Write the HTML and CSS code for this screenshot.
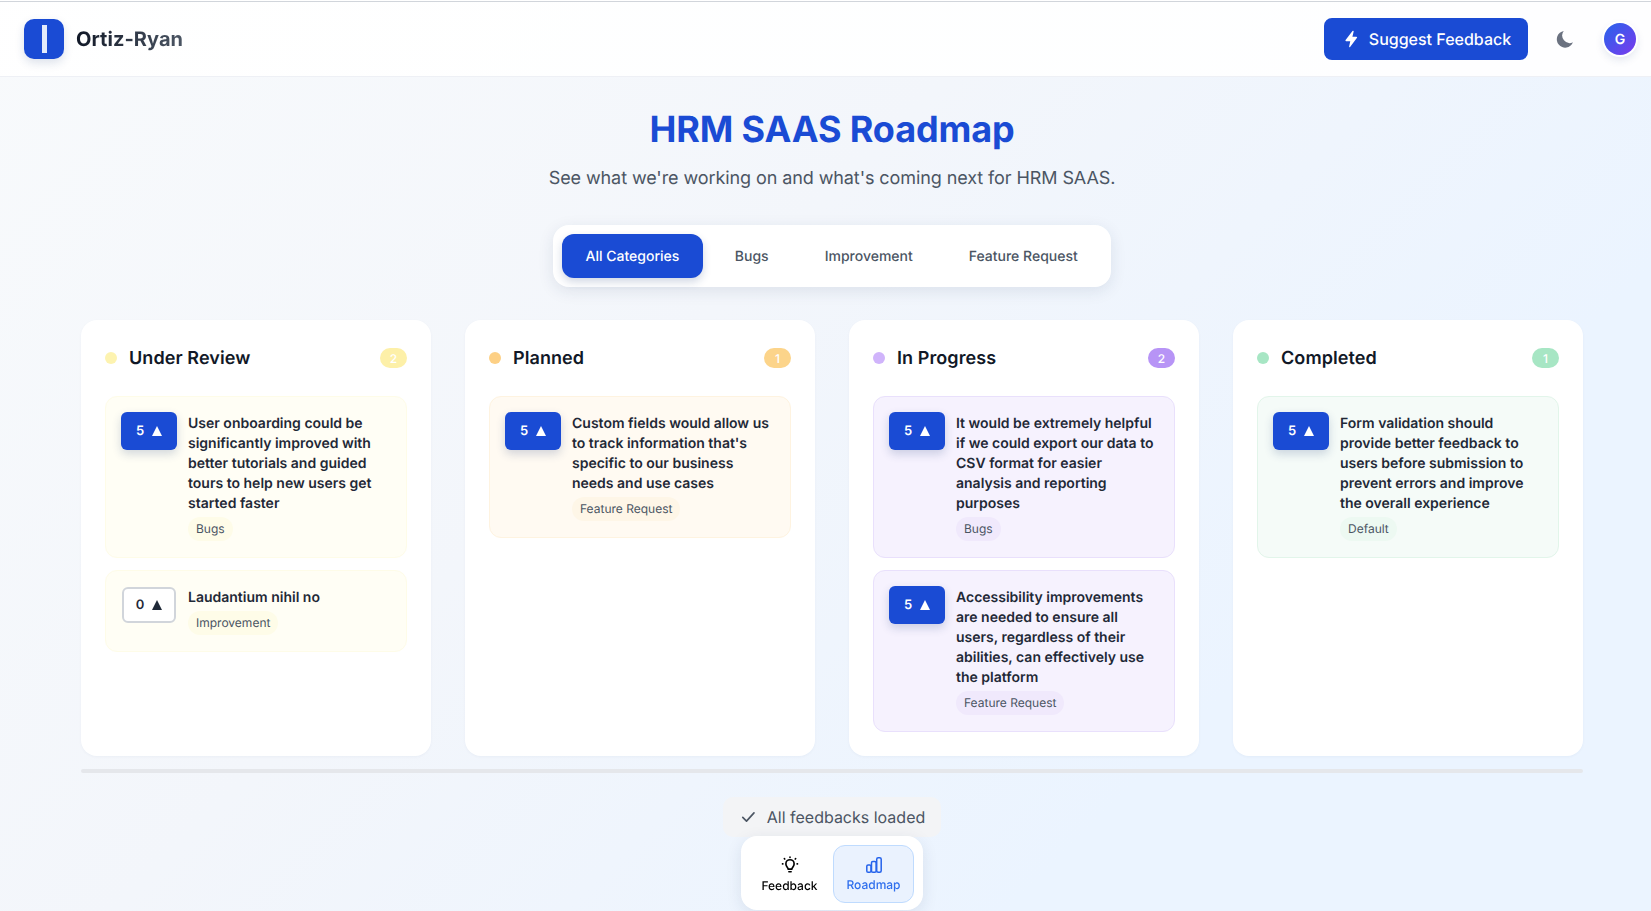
FILE: index.html
```html
<!DOCTYPE html>
<html lang="en">
<head>
<meta charset="utf-8">
<title>HRM SAAS Roadmap</title>
<link rel="stylesheet" href="styles.css">
</head>
<body>
<header class="topbar">
  <div class="brand">
    <span class="logo"><span class="logo-bar"></span></span>
    <span class="brand-name">Ortiz-Ryan</span>
  </div>
  <div class="actions">
    <button class="suggest">
      <svg class="bolt" viewBox="0 0 24 24"><path d="M13.800 2.500 5.500 13.300a.8.8 0 0 0 .6 1.300h5l-1.300 6.400c-.2.9.6 1.200 1.100.6l8.300-11a.8.8 0 0 0-.6-1.300h-4.900l1.500-6.200c.2-.9-.6-1.200-1.400-.6z" fill="#fff"/></svg>
      Suggest Feedback
    </button>
    <svg class="moon" viewBox="0 0 24 24"><path d="M10.500 2.500a10 10 0 1 0 11 13.500 9 9 0 0 1-11-13.500z" fill="#6b7280"/></svg>
    <span class="avatar">G</span>
  </div>
</header>
<main class="page">
  <h1 class="title">HRM SAAS Roadmap</h1>
  <p class="subtitle">See what we're working on and what's coming next for HRM SAAS.</p>
  <div class="filters">
    <button class="filter active">All Categories</button>
    <button class="filter">Bugs</button>
    <button class="filter">Improvement</button>
    <button class="filter">Feature Request</button>
  </div>
  <section class="board">
    <div class="column review">
      <div class="col-head"><span class="dot"></span><h2>Under Review</h2><span class="count">2</span></div>
      <article class="item"><button class="vote on"><span>5</span><i class="tri"></i></button><div class="body"><p>User onboarding could be significantly improved with better tutorials and guided tours to help new users get started faster</p><span class="tag">Bugs</span></div></article>
      <article class="item"><button class="vote"><span>0</span><i class="tri"></i></button><div class="body"><p>Laudantium nihil no</p><span class="tag">Improvement</span></div></article>
    </div>
    <div class="column planned">
      <div class="col-head"><span class="dot"></span><h2>Planned</h2><span class="count">1</span></div>
      <article class="item"><button class="vote on"><span>5</span><i class="tri"></i></button><div class="body"><p>Custom fields would allow us to track information that's specific to our business needs and use cases</p><span class="tag">Feature Request</span></div></article>
    </div>
    <div class="column progress">
      <div class="col-head"><span class="dot"></span><h2>In Progress</h2><span class="count">2</span></div>
      <article class="item"><button class="vote on"><span>5</span><i class="tri"></i></button><div class="body"><p>It would be extremely helpful if we could export our data to CSV format for easier analysis and reporting purposes</p><span class="tag">Bugs</span></div></article>
      <article class="item"><button class="vote on"><span>5</span><i class="tri"></i></button><div class="body"><p>Accessibility improvements are needed to ensure all users, regardless of their abilities, can effectively use the platform</p><span class="tag">Feature Request</span></div></article>
    </div>
    <div class="column done">
      <div class="col-head"><span class="dot"></span><h2>Completed</h2><span class="count">1</span></div>
      <article class="item"><button class="vote on"><span>5</span><i class="tri"></i></button><div class="body"><p>Form validation should provide better feedback to users before submission to prevent errors and improve the overall experience</p><span class="tag">Default</span></div></article>
    </div>
  </section>
  <div class="track"></div>
  <div class="loaded-row">
    <div class="loaded">
      <svg class="check" viewBox="0 0 24 24"><path d="M5 12.500 10 17.500 20 6.500" fill="none" stroke="#4b5563" stroke-width="2.200" stroke-linecap="round" stroke-linejoin="round"/></svg>
      All feedbacks loaded
    </div>
  </div>
</main>
<nav class="dock">
  <a class="dock-item feedback">
    <svg class="dock-icon bulb" viewBox="0 0 24 24" fill="none" stroke="#000" stroke-width="2.200" stroke-linecap="round" stroke-linejoin="round"><path d="M9.500 17.500h5M10.500 21h3M9.500 17.500c0-2-3-3.500-3-7a5.500 5.500 0 0 1 11 0c0 3.500-3 5-3 7"/><path d="M12 1.500v.5M4.500 3.500l.5.500M19.500 3.500l-.5.500M2 10.500h.5M21.500 10.500h.5"/></svg>
    Feedback
  </a>
  <a class="dock-item current">
    <svg class="dock-icon" viewBox="0 0 16 16" fill="none" stroke="#2563eb" stroke-width="1.500" stroke-linejoin="round"><rect x=".8" y="8" width="4.200" height="7.200" rx="1.300"/><rect x="5.500" y="4.500" width="4.600" height="10.700" rx="1.300"/><rect x="10.700" y=".8" width="4.500" height="14.400" rx="1.500"/></svg>
    Roadmap
  </a>
</nav>
</body>
</html>
```
FILE: styles.css
```css
* { box-sizing: border-box; }
html, body { margin: 0; height: 100%; }
body {
  font-family: Inter, "Liberation Sans", sans-serif;
  background: linear-gradient(135deg, #f8fafc 0%, #f3f6fb 40%, #ebf4ff 75%, #ebf4ff 100%);
  color: #111827;
  overflow: hidden;
  text-rendering: geometricPrecision;
}
button { font-family: inherit; border: 0; cursor: pointer; text-rendering: geometricPrecision; }
.topbar {
  height: 77px;
  padding: 2px 15px 0 24px;
  border-bottom: 1px solid #eef0f5;
  background: linear-gradient(#fff 1px, #d1d5db 1px, #d1d5db 2px, rgba(255, 255, 255, 0.95) 2px);
  display: flex;
  align-items: center;
  justify-content: space-between;
}
.brand { display: flex; align-items: center; gap: 12px; }
.logo {
  width: 40px; height: 40px;
  border-radius: 10px;
  background: #1a4bd4;
  box-shadow: 0 4px 10px rgba(30, 60, 120, 0.15);
  display: flex; align-items: center; justify-content: center;
}
.logo-bar { width: 5px; height: 28px; background: #e4ebfb; }
.brand-name {
  font-size: 20px; font-weight: 700;
  letter-spacing: 0.05px;
  background: linear-gradient(90deg, #111827, #4b5563);
  -webkit-background-clip: text; background-clip: text;
  color: transparent;
}
.actions { display: flex; align-items: center; }
.suggest {
  width: 204px; height: 42px;
  border-radius: 8px;
  background: #1a4bd4;
  color: #fff;
  font-size: 16px; font-weight: 500;
  display: flex; align-items: center; justify-content: center; gap: 8px;
  margin-right: 27px;
}
.bolt { width: 20px; height: 20px; }
.moon { width: 20px; height: 20px; margin-right: 29px; }
.avatar {
  width: 32px; height: 32px;
  border-radius: 50%;
  background: linear-gradient(135deg, #2563eb, #7c3aed);
  color: #fff; font-size: 14px; font-weight: 600;
  display: flex; align-items: center; justify-content: center;
  box-shadow: 0 0 0 2px #fff, 0 4px 10px rgba(30, 60, 120, 0.15);
}
.page { padding: 0 68px 0 81px; }
.title {
  margin: 32px 0 0;
  text-align: center;
  font-size: 36px; line-height: 40px; font-weight: 700;
  letter-spacing: -0.13px;
  color: #1a4bd4;
}
.subtitle {
  margin: 16px 0 0;
  text-align: center;
  font-size: 18px; line-height: 28px;
  letter-spacing: -0.09px;
  color: #4b5563;
}
.filters {
  width: 558px; height: 62px;
  margin: 32px auto 0;
  padding: 9px;
  background: #fff;
  border-radius: 16px;
  display: flex;
  gap: 8px;
  box-shadow: 0 4px 16px rgba(30, 50, 90, 0.1);
}
.filter {
  height: 44px;
  padding: 0 24px;
  background: transparent;
  border-radius: 12px;
  font-size: 14px; font-weight: 500;
  color: #4b5563;
  white-space: nowrap;
  flex: none;
}
.filter.active {
  padding: 0 23.5px;
  background: #1a4bd4; color: #fff;
  box-shadow: 0 4px 8px rgba(30, 60, 120, 0.2);
}
.board {
  margin-top: 33px;
  display: grid;
  grid-template-columns: repeat(4, 350px);
  gap: 34px;
}
.column {
  height: 436px;
  background: #fff;
  border-radius: 16px;
  padding: 24px;
  box-shadow: 0 1px 3px rgba(30, 50, 90, 0.04);
}
.col-head { display: flex; align-items: center; height: 28px; margin: 0 0 24px; }
.col-head h2 { margin: 2px 0 0 12px; font-size: 18px; line-height: 28px; font-weight: 600; letter-spacing: 0.08px; color: #111827; flex: 1; }
.dot { width: 12px; height: 12px; border-radius: 50%; }
.count {
  width: 27px; height: 20px; border-radius: 10px;
  color: #fff; font-size: 12px; font-weight: 500;
  display: flex; align-items: center; justify-content: center;
}
.item {
  display: flex;
  gap: 11px;
  padding: 15px;
  border: 1px solid;
  border-radius: 12px;
  margin-bottom: 12px;
}
.vote {
  flex: none;
  width: 56px; height: 38px;
  border-radius: 6px;
  display: flex; align-items: center; justify-content: center; gap: 8px;
  font-size: 13px; font-weight: 600;
  background: #fff; color: #1f2937;
  border: 2px solid #d1d5db;
}
.vote:not(.on) { width: 54px; height: 36px; margin: 1px 1px 0 1px; }
.vote.on {
  background: #1a4bd4; color: #fff; border: 0;
  box-shadow: 0 4px 10px rgba(30, 60, 120, 0.2);
}
.tri {
  width: 0; height: 0;
  border-left: 5px solid transparent;
  border-right: 5px solid transparent;
  border-bottom: 10px solid currentColor;
}
.body { flex: 1; min-width: 0; }
.body p { margin: 2px 0 3px; font-size: 14px; line-height: 20px; font-weight: 600; color: #1f2937; }
.tag {
  display: block;
  width: fit-content;
  height: 24px; line-height: 24px;
  padding: 0 8px;
  margin-bottom: 1px;
  border-radius: 12px;
  font-size: 12px;
  color: #4b5563;
}
.review .dot { background: #fdf3b0; }
.review .count { background: #fdf0a8; }
.review .item { background: #fffef5; border-color: #fefce8; }
.review .tag { background: #fefce8; }
.planned .dot { background: #fdd085; }
.planned .count { background: #fcd48a; }
.planned .item { background: #fffaf2; border-color: #fef3e0; }
.planned .tag { background: #fef6e7; }
.progress .dot { background: #d0b4fb; }
.progress .count { background: #b794f6; }
.progress .item { background: #f6f2fe; border-color: #e9e0fc; }
.progress .tag { background: #f0e9fc; }
.done .dot { background: #a7e6c4; }
.done .count { background: #a7e6c4; }
.done .item { background: #f5fbf8; border-color: #e2f5ea; }
.done .tag { background: #edf9f2; }
.track { height: 4px; background: #e5e7eb; margin: 13px 0 0; width: 1502px; border-radius: 2px; }
.loaded-row { display: flex; justify-content: center; margin-top: 24px; width: 1502px; }
.loaded {
  height: 40px;
  padding: 0 16px;
  border-radius: 10px;
  background: #f3f4f6;
  font-size: 16px;
  color: #4b5563;
  display: flex; align-items: center; gap: 10px;
}
.check { width: 18px; height: 18px; }
.dock {
  position: fixed;
  left: 741px; top: 836px;
  width: 182px; height: 74px;
  padding: 9px;
  border-radius: 16px;
  background: #fff;
  box-shadow: 0 4px 16px rgba(30, 50, 90, 0.1);
  display: flex; gap: 4px;
}
.dock-item {
  height: 58px;
  width: 81px;
  border-radius: 12px;
  border: 1px solid transparent;
  font-size: 12px; font-weight: 500;
  color: #000;
  display: flex; flex-direction: column; align-items: center; justify-content: center; gap: 4px;
}
.dock-item.feedback { width: 79px; }
.dock-item.current { background: #eaf2fe; border-color: #bfdbfe; color: #2f6fed; }
.dock-icon { width: 16px; height: 16px; }
.dock-icon.bulb { width: 18px; height: 18px; }
```
